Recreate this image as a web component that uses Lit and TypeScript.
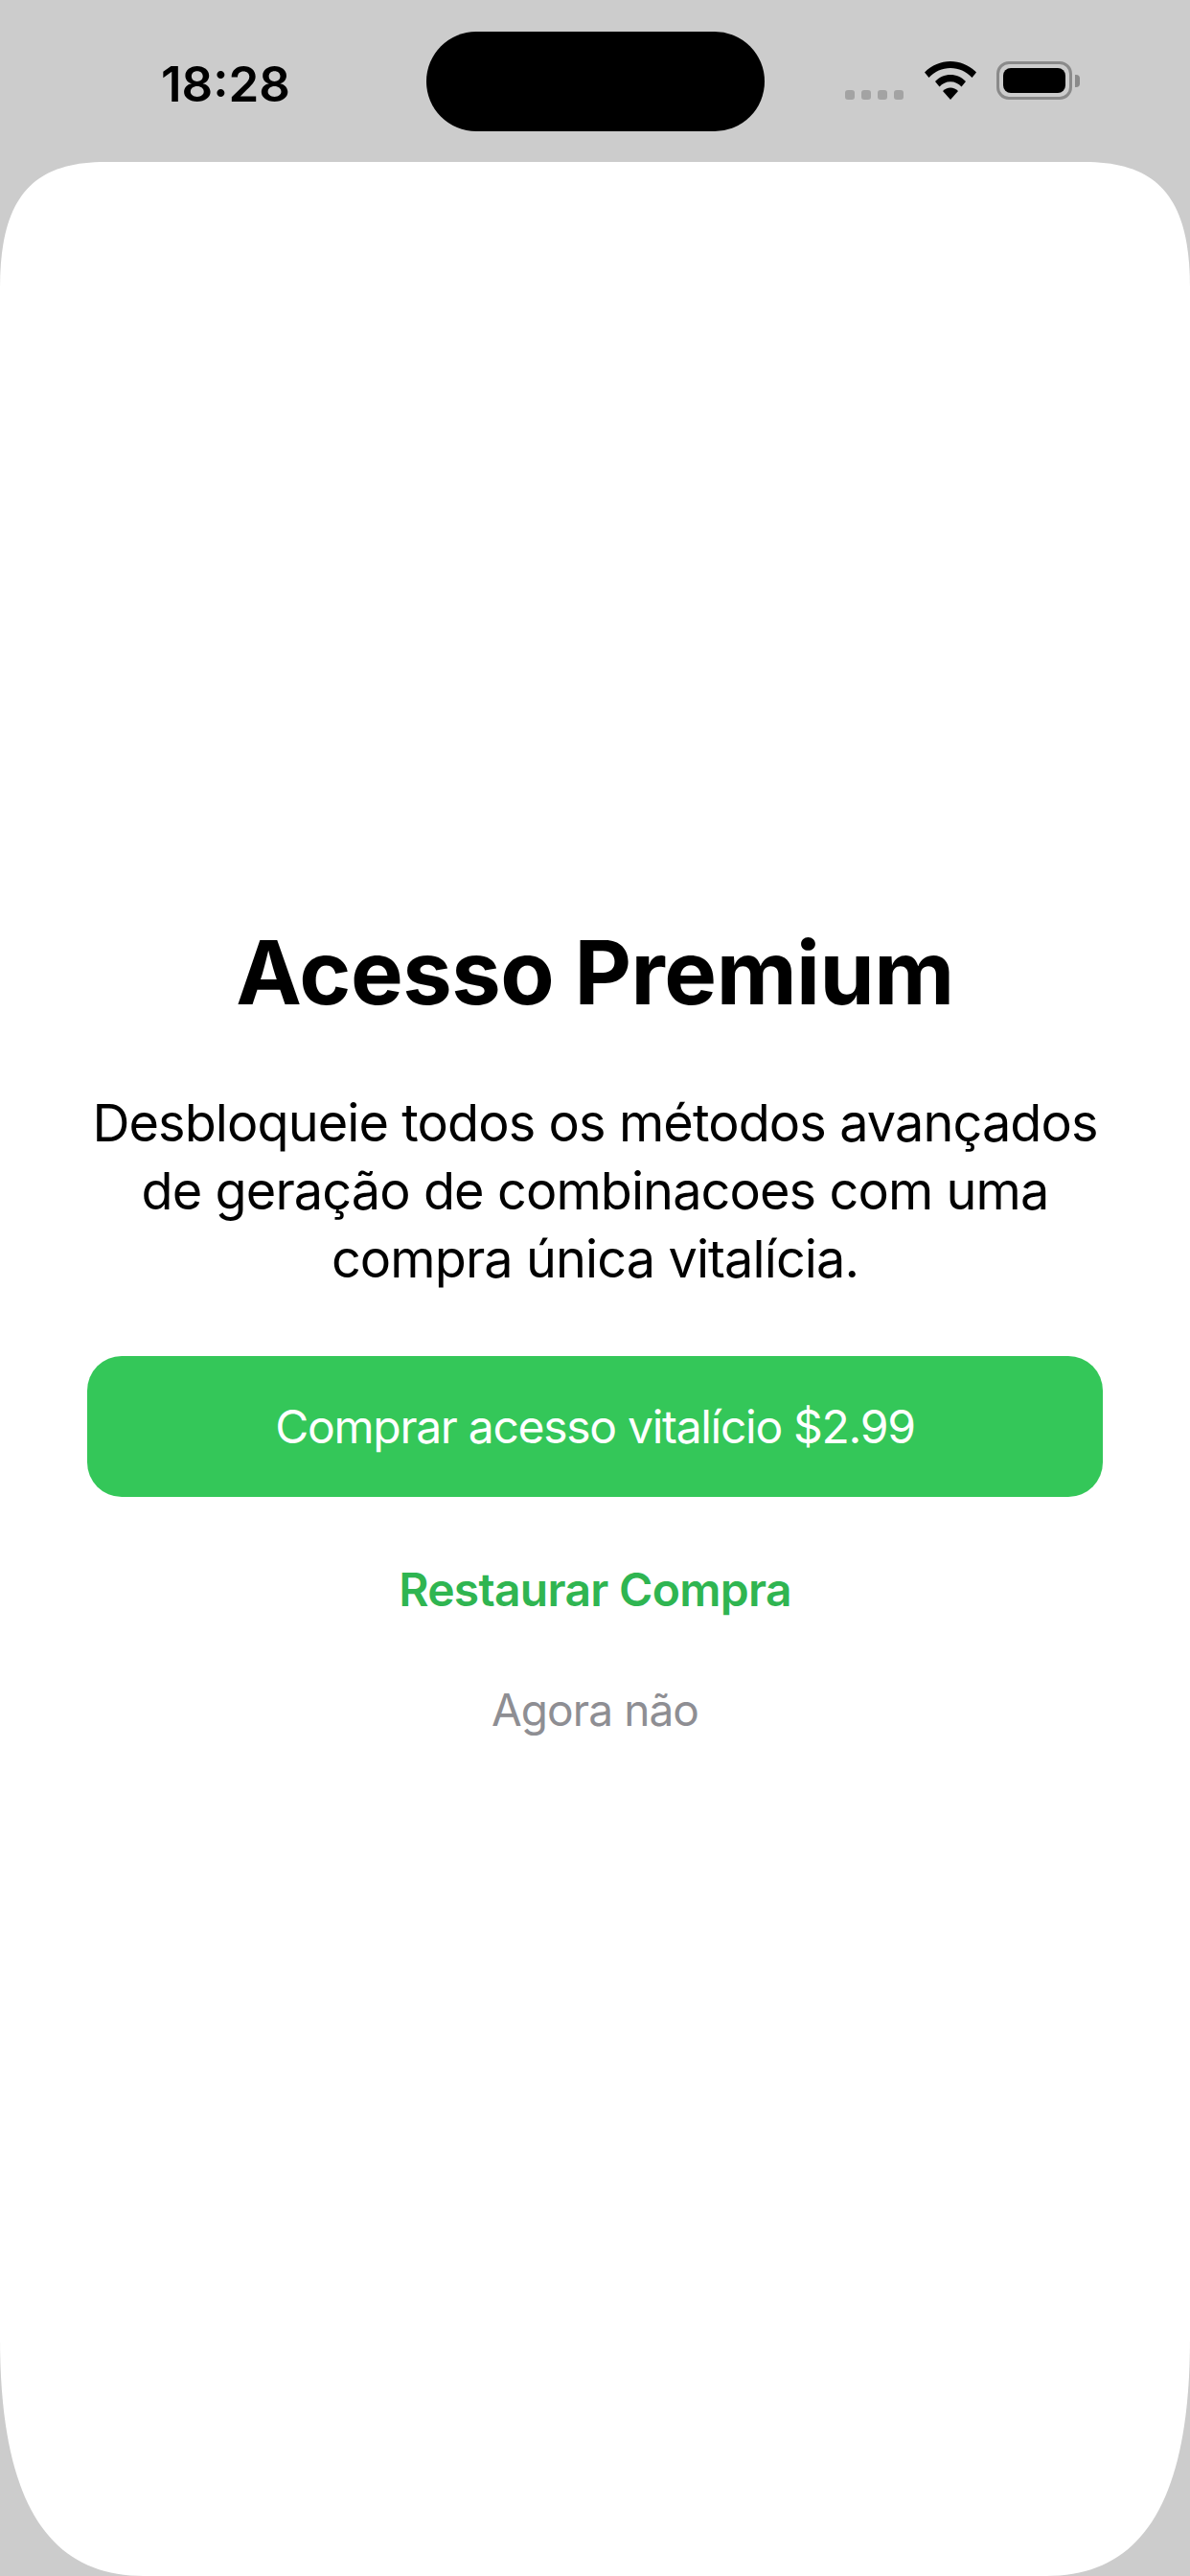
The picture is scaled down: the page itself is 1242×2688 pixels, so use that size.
import { LitElement, html, css } from "lit";
import { customElement } from "lit/decorators.js";

@customElement("app-root")
export class AppRoot extends LitElement {
  static styles = css`
    :host {
      display: block;
      width: 1242px;
      height: 2688px;
      overflow: hidden;
      background: #cccccc;
      font-family: Inter, "Liberation Sans", sans-serif;
      color: #000;
    }

    .status {
      display: grid;
      grid-template-columns: 445px 353px 1fr;
      height: 169px;
    }

    .time {
      padding: 58px 0 0 168px;
      font-size: 51px;
      line-height: 60px;
      font-weight: 600;
    }

    .island {
      margin-top: 33px;
      height: 104px;
      border-radius: 52px;
      background: #000;
    }

    .indicators {
      display: flex;
      align-items: flex-start;
      padding: 64px 0 0 84px;
    }

    .dots {
      display: flex;
      gap: 7px;
      margin-top: 30px;
    }

    .dots span {
      width: 10px;
      height: 10px;
      border-radius: 3px;
      background: #a3a3a3;
    }

    .wifi {
      display: block;
      width: 54px;
      height: 40px;
      margin-left: 22px;
    }

    .battery {
      display: flex;
      align-items: center;
      margin-left: 21px;
    }

    .battery-body {
      box-sizing: border-box;
      width: 79px;
      height: 40px;
      padding: 4px;
      border: 3px solid #8a8a8a;
      border-radius: 13px;
    }

    .battery-fill {
      height: 100%;
      border-radius: 8px;
      background: #000;
    }

    .battery-cap {
      width: 5px;
      height: 13px;
      margin-left: 3px;
      border-radius: 0 4px 4px 0;
      background: #8a8a8a;
    }

    .sheet {
      display: flex;
      flex-direction: column;
      align-items: center;
      box-sizing: border-box;
      height: 2519px;
      padding: 790px 91px 0;
      background: #fff;
      clip-path: path("M0 131C0 36 35 0 110 0H1132C1207 0 1242 36 1242 131V2271C1242 2441 1192 2519 1092 2519H150C50 2519 0 2441 0 2271Z");
    }

    .title {
      margin: 0;
      font-size: 92px;
      line-height: 112px;
      font-weight: 700;
      letter-spacing: -0.5px;
    }

    .text {
      margin: 65px 0 0;
      font-size: 54px;
      line-height: 71px;
      font-weight: 400;
      letter-spacing: -0.9px;
      text-align: center;
      white-space: nowrap;
    }

    .buy {
      display: flex;
      align-items: center;
      justify-content: center;
      width: 100%;
      height: 147px;
      margin-top: 66px;
      border-radius: 36px;
      background: #34c759;
      color: #fff;
      font-size: 48px;
      letter-spacing: -1.3px;
    }

    .restore {
      margin-top: 66px;
      font-size: 48px;
      line-height: 62px;
      font-weight: 600;
      letter-spacing: -0.7px;
      color: #2fb551;
    }

    .later {
      margin-top: 63px;
      font-size: 46px;
      line-height: 62px;
      letter-spacing: -0.9px;
      color: #8e8e93;
    }
  `;

  render() {
    return html`
      <div class="status">
        <div class="time">18:28</div>
        <div class="island"></div>
        <div class="indicators">
          <div class="dots"><span></span><span></span><span></span><span></span></div>
          <svg class="wifi" viewBox="0 0 54 40">
            <path fill="#000" d="M27 0C37 0 46.500 4 54 11.500L49.500 17C43.500 10.500 35.500 7 27 7S10.500 10.500 4.500 17L0 11.500C7.500 4 17 0 27 0Z" />
            <path fill="#000" d="M27 14C33 14 38.800 16.500 43 21L38.500 26.500C35.500 23.200 31.500 21.200 27 21.200S18.500 23.200 15.500 26.500L11 21C15.200 16.500 21 14 27 14Z" />
            <path fill="#000" d="M27 27.500C30 27.500 32.800 28.700 35 31L27 40L19 31C21.200 28.700 24 27.500 27 27.500Z" />
          </svg>
          <div class="battery">
            <div class="battery-body"><div class="battery-fill"></div></div>
            <div class="battery-cap"></div>
          </div>
        </div>
      </div>
      <main class="sheet">
        <h1 class="title">Acesso Premium</h1>
        <p class="text">Desbloqueie todos os métodos avançados<br />de geração de combinacoes com uma<br />compra única vitalícia.</p>
        <div class="buy">Comprar acesso vitalício $2.99</div>
        <div class="restore">Restaurar Compra</div>
        <div class="later">Agora não</div>
      </main>
    `;
  }
}
